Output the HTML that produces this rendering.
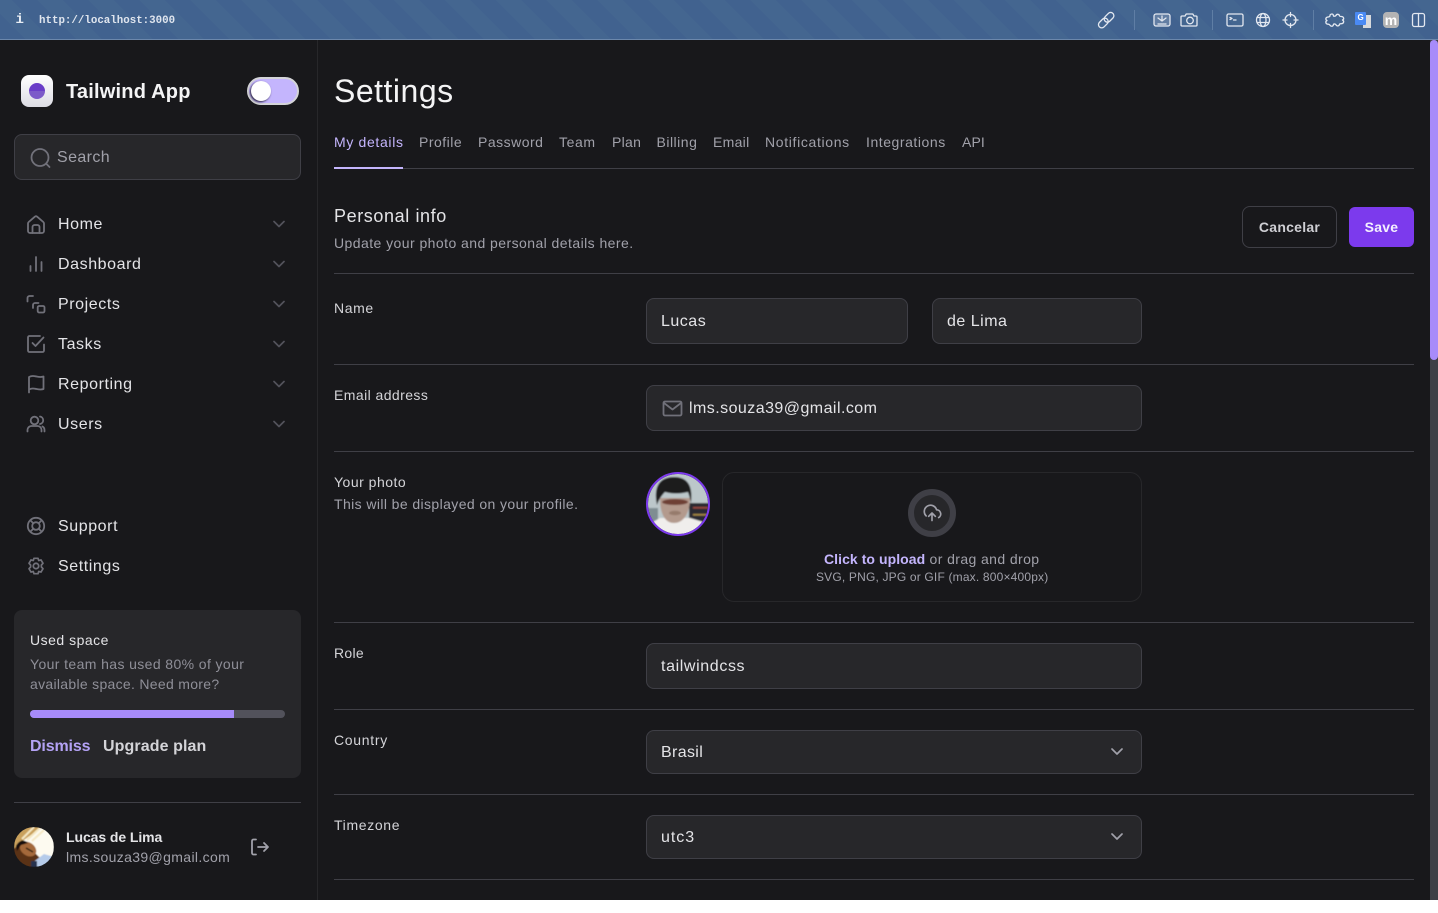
<!DOCTYPE html>
<html><head><meta charset="utf-8"><title>Settings</title>
<style>
html,body{margin:0;padding:0;background:#fff;width:1438px;height:913px;overflow:hidden}
body{font-family:"Liberation Sans",sans-serif;position:relative}
#app{position:absolute;left:0;top:0;width:1438px;height:900px;background:#18181b;overflow:hidden}
.t{position:absolute;white-space:nowrap;line-height:20px;height:20px}
.b{position:absolute;box-sizing:border-box}
.inp{background:#27272a;border:1px solid #3f3f46;border-radius:8px}
.hr{position:absolute;height:1px;background:#3f3f46;left:334px;width:1080px}
.nav{font-size:16px;color:#e4e4e7;letter-spacing:.58px;left:58px}
.tab{font-size:14px;color:#a1a1aa;letter-spacing:.5px;top:132px}
.lab{font-size:14px;color:#d4d4d8;letter-spacing:.5px;left:334px}
.val{font-size:16px;color:#e4e4e7;letter-spacing:.5px}
svg{position:absolute;overflow:visible}
.ic{fill:none;stroke:#71717a;stroke-width:1.8;stroke-linecap:round;stroke-linejoin:round}
.ch{fill:none;stroke:#52525b;stroke-width:1.7;stroke-linecap:round;stroke-linejoin:round}
.tb{fill:none;stroke:#e3e8f0;stroke-width:1.3;stroke-linecap:round;stroke-linejoin:round}
</style></head><body>
<div id="app">
<!-- browser bar -->
<div class="b" style="left:0;top:0;width:1438px;height:40px;background:repeating-linear-gradient(45deg,#41628f 0 18px,#446690 18px 36px);border-bottom:1px solid #6c88ac"></div>
<span class="t" style="left:15.500px;top:10px;font:bold 14px/20px 'Liberation Mono',monospace;color:#e8edf4">i</span>
<span class="t" style="left:39px;top:11px;font:bold 10.800px/20px 'Liberation Mono',monospace;color:#dfe5ee">http://localhost:3000</span>
<svg style="left:0;top:0" width="1438" height="40">
<g class="tb">
<rect x="-6" y="-3" width="11" height="6.500" rx="3.200" transform="translate(1103.500 22.500) rotate(-45)"/>
<rect x="-5" y="-3" width="11" height="6.500" rx="3.200" transform="translate(1108.500 17.500) rotate(-45)"/>
<rect x="1154" y="14" width="16" height="12" rx="2" fill="rgba(255,255,255,.18)"/>
<path d="M1158 18l4 3 4-3M1162 16v5M1158 24h8" stroke-dasharray="1.500 .8"/>
<path d="M1182 16h3l1.200-2h6.600l1.200 2h2a1 1 0 0 1 1 1v8a1 1 0 0 1-1 1h-14a1 1 0 0 1-1-1v-8a1 1 0 0 1 1-1z"/>
<circle cx="1190" cy="20.500" r="3.300"/>
<rect x="1227" y="14" width="16" height="12" rx="1.500"/>
<path d="M1230 17.500l2 1-2 1M1233.500 20h2.500"/>
<circle cx="1263" cy="20" r="6.500"/>
<ellipse cx="1263" cy="20" rx="3" ry="6.500"/>
<path d="M1257 17.500h12M1257 22.500h12"/>
<circle cx="1290.500" cy="20" r="5.500"/>
<path d="M1290.500 12.500v4M1290.500 23.500v4M1283 20h4M1294 20h4"/>
<path d="M1330 15c1.200-1.600 3.200-1.200 3.400.5.100 1 1.600 1 2.600 0 .6-1.800 3.200-1.500 3.500.3.100.6.900.7 1.800.7 2.500 0 3.200 2.700 1.200 3.500 2 1 1.300 3.700-1.200 3.700-.9 0-1.700.1-1.800.7-.3 1.800-2.900 2.100-3.500.3-1-1-2.500-1-2.600 0-.2 1.700-2.200 2.100-3.400.5-.5-.7-1-1-1.800-1-2.500 0-3.200-2.600-1.200-3.700-2-1-1.300-3.500 1.200-3.500.8 0 1.300-.3 1.800-1z"/>
</g>
<rect x="1134" y="10" width="1" height="20" fill="#5f7ea5"/>
<rect x="1212" y="10" width="1" height="20" fill="#5f7ea5"/>
<rect x="1313" y="10" width="1" height="20" fill="#5f7ea5"/>
<rect x="1363" y="15" width="8" height="13" fill="#d7d9dc"/>
<rect x="1355" y="12" width="11" height="13" rx="1" fill="#4a8af4"/>
<rect x="1383" y="12" width="16" height="16" rx="4" fill="#b4b4b4"/>
<rect x="1412.500" y="13.500" width="12" height="13" rx="2" class="tb"/>
<path d="M1418.500 13.500v13" class="tb"/>
</svg>
<span class="t" style="left:1357.500px;top:9px;font:bold 8px/18px 'Liberation Sans';color:#fff">G</span>
<span class="t" style="left:1381.500px;top:10px;width:19px;text-align:center;font:bold 14px/20px 'Liberation Sans';color:#fff">m</span>

<!-- sidebar -->
<div class="b" style="left:317px;top:40px;width:1px;height:860px;background:#27272a"></div>
<div class="b" style="left:21px;top:75px;width:32px;height:32px;border-radius:8px;background:linear-gradient(#fff,#dcdce4)"></div>
<svg style="left:21px;top:75px" width="32" height="32"><path d="M8 16a8 8 0 0 1 16 0z" fill="#6a3dc8"/><path d="M8 16a8 8 0 0 0 16 0z" fill="#7c5ac9"/></svg>
<span class="t" style="left:66px;top:82px;font-size:20px;font-weight:bold;color:#f4f4f5;letter-spacing:.2px">Tailwind App</span>
<div class="b" style="left:247px;top:77px;width:52px;height:28px;border-radius:14px;background:#c4b5fd;border:2px solid #d4d4d8"></div>
<div class="b" style="left:251px;top:81px;width:20px;height:20px;border-radius:50%;background:#fff;box-shadow:-1px 1px 2px #1f1a33"></div>
<div class="b inp" style="left:14px;top:134px;width:287px;height:46px"></div>
<svg style="left:28px;top:146px" width="24" height="24" viewBox="0 0 24 24"><circle cx="12" cy="11.500" r="8.500" class="ic" stroke-width="2"/><path d="M18.500 18l3 3" class="ic"/></svg>
<span class="t" style="left:57px;top:148px;font-size:16px;color:#a1a1aa;letter-spacing:.4px">Search</span>

<span class="t nav" style="top:215px">Home</span>
<span class="t nav" style="top:255px">Dashboard</span>
<span class="t nav" style="top:295px">Projects</span>
<span class="t nav" style="top:335px">Tasks</span>
<span class="t nav" style="top:375px">Reporting</span>
<span class="t nav" style="top:415px">Users</span>
<span class="t nav" style="top:517px">Support</span>
<span class="t nav" style="top:557px">Settings</span>

<svg style="left:0;top:0" width="320" height="900">
<g class="ic">
<path d="M28 231v-7.500a2 2 0 0 1 .7-1.500l6-5.200a2 2 0 0 1 2.600 0l6 5.200a2 2 0 0 1 .7 1.500v7.500a2 2 0 0 1-2 2H30a2 2 0 0 1-2-2z"/>
<path d="M32.500 233v-6a2 2 0 0 1 2-2h3a2 2 0 0 1 2 2v6"/>
<path d="M30.500 271v-5M36 271v-14M41.500 271v-9"/>
<path d="M27.500 301.500V298a2 2 0 0 1 2-2H33M33 308v-3a2 2 0 0 1 2-2h3.500"/>
<rect x="37.700" y="306" width="6.800" height="6.500" rx="1.500"/>
<path d="M32.500 343l3 3 8-8.500"/>
<path d="M44 344.500v6a1.500 1.500 0 0 1-1.500 1.500h-13a1.500 1.500 0 0 1-1.500-1.500v-13a1.500 1.500 0 0 1 1.500-1.500H40"/>
<path d="M29 392.500V377c3-1.500 5-1 7.500-.5s5 .8 7 0V389c-2 .8-4.500.5-7 0s-4.500-1-7.500.5"/>
<circle cx="34.500" cy="420.500" r="3.800"/>
<path d="M27.500 431.500v-1.500a4 4 0 0 1 4-4h6a4 4 0 0 1 4 4v1.500M40 416.500a3.800 3.800 0 0 1 0 7.500M44.500 431.500v-1.500a4 4 0 0 0-2-3.500"/>
<circle cx="36" cy="526" r="8.200"/>
<circle cx="36" cy="526" r="3.800"/>
<path d="M30.500 520.500l2.800 2.800M41.500 520.500l-2.800 2.800M30.500 531.500l2.800-2.800M41.500 531.500l-2.800-2.800"/>
<circle cx="36" cy="566" r="2.700"/>
<path d="M34 558.300h4l.7 2.200 2.300-.6 2 3.400-1.600 1.700v2l1.600 1.700-2 3.400-2.300-.6-.7 2.200h-4l-.7-2.200-2.300.6-2-3.400 1.600-1.700v-2l-1.600-1.700 2-3.400 2.300.6z" stroke-width="1.700"/>
<path d="M256 839.500h-2.500a1.500 1.500 0 0 0-1.500 1.500v12a1.500 1.500 0 0 0 1.500 1.500h2.500" stroke="#a1a1aa"/>
<path d="M258 847h10M264 843l4 4-4 4" stroke="#a1a1aa"/>
</g>
<g class="ch" transform="translate(0 -.5)">
<path d="M274 222l5 5 5-5M274 262l5 5 5-5M274 302l5 5 5-5M274 342l5 5 5-5M274 382l5 5 5-5M274 422l5 5 5-5"/>
</g>
</svg>

<div class="b" style="left:14px;top:610px;width:287px;height:168px;background:#27272a;border-radius:8px"></div>
<span class="t" style="left:30px;top:630px;font-size:14px;color:#e4e4e7;letter-spacing:.5px">Used space</span>
<span class="t" style="left:30px;top:654px;font-size:14px;color:#8f8f98;letter-spacing:.39px">Your team has used 80% of your</span>
<span class="t" style="left:30px;top:674px;font-size:14px;color:#8f8f98;letter-spacing:.3px">available space. Need more?</span>
<div class="b" style="left:30px;top:710px;width:255px;height:8px;border-radius:4px;background:#52525b"></div>
<div class="b" style="left:30px;top:710px;width:204px;height:8px;border-radius:4px 0 0 4px;background:#a78bfa"></div>
<span class="t" style="left:30px;top:737px;font-size:16px;font-weight:bold;color:#b4a2f5;letter-spacing:-.15px">Dismiss</span>
<span class="t" style="left:103px;top:737px;font-size:16px;font-weight:bold;color:#d4d4d8;letter-spacing:.1px">Upgrade plan</span>
<div class="b" style="left:14px;top:802px;width:287px;height:1px;background:#3f3f46"></div>
<svg style="left:14px;top:827px" width="40" height="40" viewBox="0 0 40 40">
<defs><clipPath id="c1"><circle cx="20" cy="20" r="20"/></clipPath><filter id="f1"><feGaussianBlur stdDeviation=".4"/></filter></defs>
<g clip-path="url(#c1)"><g filter="url(#f1)">
<rect width="40" height="40" fill="#fdfaf0"/>
<path d="M0 0h28L10 13 0 24z" fill="#c9a05c"/>
<path d="M8 12L20 0M13 13L26 1M18 14L30 3" stroke="#f5e8c4" stroke-width="2"/>
<path d="M0 22L8 13l18 18-6 9H0z" fill="#5a3216"/>
<ellipse cx="14" cy="22" rx="9" ry="6.500" transform="rotate(35 14 22)" fill="#a4693a"/>
<path d="M2 19c3-6 8-7 12-3l-7 2-4 6z" fill="#120c08"/>
<path d="M12 21l7 4" stroke="#2c1c10" stroke-width="1.500"/>
<path d="M18 36l12-9 10 3v10H18z" fill="#b5cbea"/>
<path d="M17 34h6v6h-6z" fill="#27334f"/>
</g></g></svg>
<span class="t" style="left:66px;top:827px;font-size:14px;font-weight:bold;color:#e4e4e7;letter-spacing:-.08px">Lucas de Lima</span>
<span class="t" style="left:66px;top:847px;font-size:14px;color:#a1a1aa;letter-spacing:.36px">lms.souza39@gmail.com</span>

<!-- main -->
<span class="t" style="left:334px;top:71px;height:40px;line-height:40px;font-size:32px;color:#f4f4f5;letter-spacing:.5px">Settings</span>
<span class="t tab" style="left:334px;color:#c4b5fd;letter-spacing:.66px">My details</span>
<span class="t tab" style="left:419px">Profile</span>
<span class="t tab" style="left:478px">Password</span>
<span class="t tab" style="left:559px;letter-spacing:.6px">Team</span>
<span class="t tab" style="left:612px;letter-spacing:.3px">Plan</span>
<span class="t tab" style="left:656.500px">Billing</span>
<span class="t tab" style="left:713px;letter-spacing:.3px">Email</span>
<span class="t tab" style="left:765px;letter-spacing:.66px">Notifications</span>
<span class="t tab" style="left:866px;letter-spacing:.55px">Integrations</span>
<span class="t tab" style="left:962px;letter-spacing:.1px">API</span>
<div class="hr" style="top:168px"></div>
<div class="b" style="left:334px;top:167px;width:69px;height:2px;background:#c4b5fd"></div>

<span class="t" style="left:334px;top:206px;font-size:18px;color:#e4e4e7;letter-spacing:.6px">Personal info</span>
<span class="t" style="left:334px;top:233px;font-size:14px;color:#a1a1aa;letter-spacing:.44px">Update your photo and personal details here.</span>
<div class="b" style="left:1242px;top:206px;width:95px;height:42px;border:1px solid #3f3f46;border-radius:8px"></div>
<span class="t" style="left:1242px;width:95px;text-align:center;top:217px;font-size:14px;font-weight:bold;color:#cfcfd4;letter-spacing:.25px">Cancelar</span>
<div class="b" style="left:1349px;top:207px;width:65px;height:40px;background:#7c3aed;border-radius:6px"></div>
<span class="t" style="left:1349px;width:65px;text-align:center;top:217px;font-size:14px;font-weight:bold;color:#f4f0ff;letter-spacing:.25px">Save</span>
<div class="hr" style="top:273px"></div>

<span class="t lab" style="top:298px;letter-spacing:.6px">Name</span>
<div class="b inp" style="left:646px;top:298px;width:262px;height:46px"></div>
<span class="t val" style="left:661px;top:312px">Lucas</span>
<div class="b inp" style="left:932px;top:298px;width:210px;height:46px"></div>
<span class="t val" style="left:947px;top:312px">de Lima</span>
<div class="hr" style="top:364px"></div>

<span class="t lab" style="top:385px;letter-spacing:.43px">Email address</span>
<div class="b inp" style="left:646px;top:385px;width:496px;height:46px"></div>
<svg style="left:661px;top:398px" width="24" height="24" viewBox="0 0 24 24"><rect x="2.500" y="3.500" width="18" height="14" rx="1.500" class="ic"/><path d="M3 5l8.500 6.500L20 5" class="ic"/></svg>
<span class="t val" style="left:689px;top:399px;letter-spacing:.45px">lms.souza39@gmail.com</span>
<div class="hr" style="top:451px"></div>

<span class="t lab" style="top:472px">Your photo</span>
<span class="t" style="left:334px;top:494px;font-size:14px;color:#a1a1aa;letter-spacing:.4px">This will be displayed on your profile.</span>
<svg style="left:646px;top:472px" width="64" height="64" viewBox="0 0 64 64">
<defs><clipPath id="c2"><circle cx="32" cy="32" r="30"/></clipPath><filter id="f2"><feGaussianBlur stdDeviation=".8"/></filter></defs>
<g clip-path="url(#c2)"><g filter="url(#f2)">
<rect width="64" height="64" fill="#bcc7ca"/>
<rect x="0" y="36" width="12" height="20" fill="#7f8d92"/>
<rect x="43" y="31" width="21" height="20" fill="#2a2b33"/>
<rect x="47" y="35" width="15" height="1.500" fill="#9c4a40"/><rect x="47" y="42" width="15" height="1.500" fill="#ab8d44"/>
<path d="M0 64V54l14-8h30l20 6v12z" fill="#f0eeec"/>
<path d="M14 26c0 16 5 25 14 25s16-9 16-25z" fill="#b39a8d"/>
<path d="M11 33C7 14 14 5 28 5s19 9 17 26c-1-5-2-8-3-11-8 2-16 2-23 0-3 3-6 7-8 13z" fill="#1d1a1c"/>
<ellipse cx="29" cy="30" rx="13" ry="3" fill="#6e4035"/>
<ellipse cx="29" cy="41" rx="6" ry="2.200" fill="#957a6c"/>
</g></g>
<circle cx="32" cy="32" r="31" fill="none" stroke="#7c3aed" stroke-width="2"/>
</svg>
<div class="b" style="left:722px;top:472px;width:420px;height:130px;border:1px solid #27272a;border-radius:12px"></div>
<div class="b" style="left:908px;top:489px;width:48px;height:48px;border-radius:50%;background:#27272a;border:6px solid #3f3f46"></div>
<svg style="left:922px;top:503px" width="20" height="20" viewBox="0 0 24 24"><path d="M8 16l4-4 4 4M12 12v9M20 17.500a5 5 0 0 0-2.500-9.300 7.500 7.500 0 1 0-12.500 7.300" fill="none" stroke="#a1a1aa" stroke-width="2" stroke-linecap="round" stroke-linejoin="round"/></svg>
<span class="t" style="left:824px;top:549px;font-size:14px;color:#a1a1aa;letter-spacing:.4px"><b style="color:#c4b5fd;letter-spacing:.06px">Click to upload</b> or drag and drop</span>
<span class="t" style="left:816px;top:567px;font-size:12px;color:#a1a1aa;letter-spacing:.18px">SVG, PNG, JPG or GIF (max. 800×400px)</span>
<div class="hr" style="top:622px"></div>

<span class="t lab" style="top:643px;letter-spacing:.3px">Role</span>
<div class="b inp" style="left:646px;top:643px;width:496px;height:46px"></div>
<span class="t val" style="left:661px;top:657px;letter-spacing:.62px">tailwindcss</span>
<div class="hr" style="top:709px"></div>

<span class="t lab" style="top:730px;letter-spacing:.7px">Country</span>
<div class="b inp" style="left:646px;top:730px;width:496px;height:44px"></div>
<span class="t val" style="left:661px;top:743px;letter-spacing:.35px">Brasil</span>
<div class="hr" style="top:794px"></div>

<span class="t lab" style="top:815px;letter-spacing:.65px">Timezone</span>
<div class="b inp" style="left:646px;top:815px;width:496px;height:44px"></div>
<span class="t val" style="left:661px;top:828px;letter-spacing:.95px">utc3</span>
<div class="hr" style="top:879px"></div>
<svg style="left:0;top:0" width="1438" height="900"><path d="M1112 749l5 5 5-5M1112 834l5 5 5-5" fill="none" stroke="#a1a1aa" stroke-width="1.700" stroke-linecap="round" stroke-linejoin="round"/></svg>

<!-- scrollbar -->
<div class="b" style="left:1430px;top:40px;width:8px;height:860px;background:#3f3f46"></div>
<div class="b" style="left:1430px;top:40px;width:8px;height:320px;background:#a78bfa;border-radius:4px"></div>
</div>
</body></html>
